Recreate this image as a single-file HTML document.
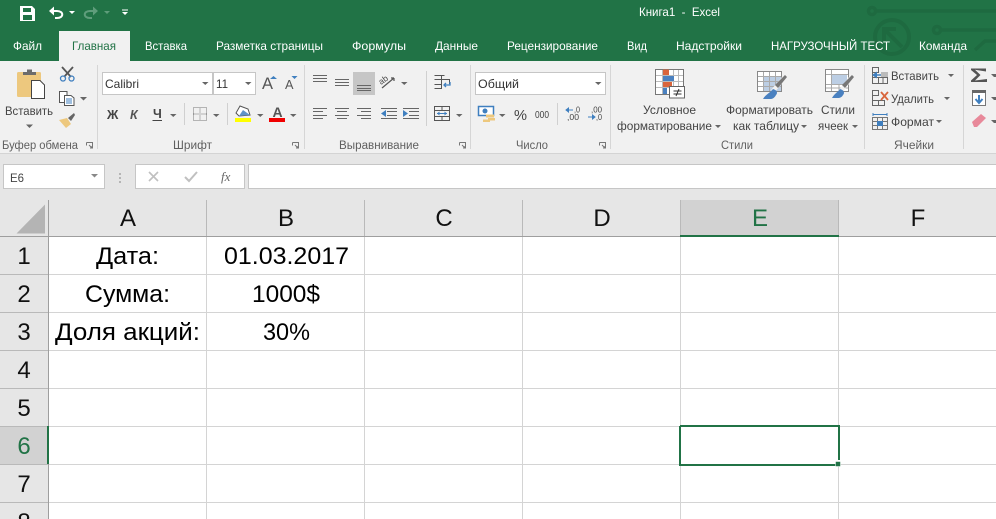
<!DOCTYPE html>
<html><head><meta charset="utf-8"><style>
html,body{margin:0;padding:0;width:996px;height:519px;overflow:hidden;background:#fff}
svg{display:block}
text{font-family:"Liberation Sans","Noto Sans CJK SC",sans-serif}
.t{font-size:12px;fill:#fff}
.r{font-size:12px;fill:#444}
.g{font-size:11.5px;fill:#5f5f5f}
.c{font-size:24px;fill:#000}
.h{font-size:24px;fill:#111}
</style></head><body>
<svg width="996" height="519" viewBox="0 0 996 519" xmlns="http://www.w3.org/2000/svg">
<rect width="996" height="61" fill="#217346"/>
<g fill="none" stroke="#1e6a40" stroke-width="3.5">
<circle cx="872" cy="11" r="3.500"/><path d="M876 11H996"/>
<circle cx="892" cy="37" r="17" stroke-width="4"/><path d="M902 47L885 30M884 41V29H896" stroke-width="4"/>
<circle cx="937" cy="30" r="3.500"/><path d="M941 30H996"/>
<path d="M975 50L985 41H996"/>
</g>
<!-- ribbon -->
<rect y="61" width="996" height="92" fill="#f1f1f1"/>
<rect y="153" width="996" height="47" fill="#e6e6e6"/>
<rect y="153" width="996" height="1" fill="#d4d4d4"/>
<rect x="59" y="31" width="71" height="30" fill="#f1f1f1"/>
<!-- QAT -->
<path d="M20 6H32L35 9V21H20ZM23 8V12H31V8ZM23 15V20H32V15Z" fill="#fff" fill-rule="evenodd"/>
<path d="M50 11H57C64 11 64 18 57 18H55" fill="none" stroke="#fff" stroke-width="2"/><path d="M49 11L54 6.500V15.500Z" fill="#fff"/>
<path d="M97 11H90C83 11 83 18 90 18H92" fill="none" stroke="#5f9d7b" stroke-width="2"/><path d="M98 11L93 6.500V15.500Z" fill="#5f9d7b"/>
<path d="M69 11h6l-3 3z" fill="#fff"/><path d="M104 11h6l-3 3z" fill="#5f9d7b"/>
<path d="M122 9.500h6v1h-6zM122 12h6l-3 3z" fill="#fff"/>
<text x="639" y="16" class="t" textLength="81" lengthAdjust="spacingAndGlyphs" xml:space="preserve">Книга1  -  Excel</text>
<!-- tabs -->
<text x="13" y="50" class="t" textLength="29" lengthAdjust="spacingAndGlyphs">Файл</text>
<text x="72" y="50" class="t" style="fill:#217346" textLength="44" lengthAdjust="spacingAndGlyphs">Главная</text>
<text x="145" y="50" class="t" textLength="42" lengthAdjust="spacingAndGlyphs">Вставка</text>
<text x="216" y="50" class="t" textLength="107" lengthAdjust="spacingAndGlyphs">Разметка страницы</text>
<text x="352" y="50" class="t" textLength="54" lengthAdjust="spacingAndGlyphs">Формулы</text>
<text x="435" y="50" class="t" textLength="43" lengthAdjust="spacingAndGlyphs">Данные</text>
<text x="507" y="50" class="t" textLength="91" lengthAdjust="spacingAndGlyphs">Рецензирование</text>
<text x="627" y="50" class="t" textLength="20" lengthAdjust="spacingAndGlyphs">Вид</text>
<text x="676" y="50" class="t" textLength="66" lengthAdjust="spacingAndGlyphs">Надстройки</text>
<text x="771" y="50" class="t" textLength="119" lengthAdjust="spacingAndGlyphs">НАГРУЗОЧНЫЙ ТЕСТ</text>
<text x="919" y="50" class="t" textLength="48" lengthAdjust="spacingAndGlyphs">Команда</text>
<!-- ribbon separators -->
<path d="M97.500 65V149M304.500 65V149M470.500 65V149M610.500 65V149M864.500 65V149M963.500 65V149" stroke="#d6d6d6"/>
<path d="M184.500 103V125M227.500 103V125M426.500 71V126M557.500 103V125" stroke="#d0d0d0"/>
<!-- clipboard -->
<rect x="17" y="72" width="24" height="25" rx="1.500" fill="#edc87e"/>
<path d="M23 75V72H27V69.500H32V72H36V75Z" fill="#6b6b6b"/>
<path d="M31.500 80.500H40L44.500 85V98.500H31.500Z" fill="#fff" stroke="#444"/>
<text x="5" y="115" class="r" textLength="48" lengthAdjust="spacingAndGlyphs">Вставить</text>
<path d="M62 67L71 77M73 67L64 77" stroke="#555" stroke-width="1.800"/>
<circle cx="63" cy="78.500" r="2.500" fill="none" stroke="#3f7fbf" stroke-width="1.300"/><circle cx="71.500" cy="78.500" r="2.500" fill="none" stroke="#3f7fbf" stroke-width="1.300"/>
<path d="M59.500 91.500H67V102.500H59.500Z" fill="#fff" stroke="#555"/><path d="M64.500 95.500H71L74 98V105.500H64.500Z" fill="#fff" stroke="#555"/><path d="M66 99h6M66 101h6M66 103h6" stroke="#3f7fbf"/>
<path d="M59 120L67 118L71 124L66 128Z" fill="#edc87e"/><path d="M68 118L74 113L75 115L71 121Z" fill="#666"/>
<!-- font -->
<rect x="102.500" y="72.500" width="110" height="22" fill="#fff" stroke="#c6c6c6"/>
<rect x="213.500" y="72.500" width="42" height="22" fill="#fff" stroke="#c6c6c6"/>
<text x="105" y="88" class="r" style="fill:#333" textLength="34" lengthAdjust="spacingAndGlyphs">Calibri</text>
<text x="216" y="88" class="r" style="fill:#333" textLength="12" lengthAdjust="spacingAndGlyphs">11</text>
<text x="262" y="89" style="font-size:17px;fill:#555" textLength="11" lengthAdjust="spacingAndGlyphs">A</text>
<text x="285" y="89" style="font-size:13px;fill:#555" textLength="8.500" lengthAdjust="spacingAndGlyphs">A</text>
<path d="M270 79l3.500-3 3.500 3zM291.500 76h6l-3 3z" fill="#3f7fbf"/>
<text x="107" y="119" style="font-size:12.500px;font-weight:bold;fill:#444">Ж</text>
<text x="130" y="119" style="font-size:12.500px;font-weight:bold;font-style:italic;fill:#555">К</text>
<text x="153" y="118" style="font-size:12.500px;font-weight:bold;fill:#444">Ч</text>
<path d="M152.500 120.500H162" stroke="#444"/>
<path d="M193.500 107.500H206.500V120.500H193.500ZM200 107.500V120.500M193.500 114H206.500" fill="none" stroke="#777" stroke-dasharray="1 1"/>
<path d="M240 106L248 109L250 115L239 116L236 113Z" fill="#fff" stroke="#555"/><path d="M243 110L250 115L239 116Z" fill="#5f93c8"/>
<rect x="235" y="118" width="16" height="4" fill="#ffff00"/>
<text x="272.500" y="117" style="font-size:14px;font-weight:bold;fill:#555">A</text>
<rect x="269" y="118" width="16" height="4" fill="#f00000"/>
<!-- alignment -->
<path d="M313 75.500h14M313 78.500h14M313 81.500h14M335 79.500h14M335 82.500h14M335 85.500h14" stroke="#666"/>
<rect x="353" y="72" width="22" height="23" fill="#c6c6c6"/>
<path d="M357 85.500h14M357 88.500h14M357 90.500h14" stroke="#666"/>
<path d="M382 88L394 78M394 78h-3M394 78v3" stroke="#555" stroke-width="1.200" fill="none"/>
<text x="381" y="85" transform="rotate(-35 381 85)" style="font-size:8.500px;fill:#444">ab</text>
<path d="M313 108.500h14M313 111.500h10M313 115.500h14M313 118.500h10M335 108.500h14M337 111.500h10M335 115.500h14M337 118.500h10M357 108.500h14M361 111.500h10M357 115.500h14M361 118.500h10M381 108.500h16M387 111.500h10M387 115.500h10M381 118.500h16M403 108.500h16M409 111.500h10M409 115.500h10M403 118.500h16" stroke="#666"/>
<path d="M381 113.500l5-3.500v7z" fill="#3f7fbf"/><path d="M408 113.500l-5-3.500v7z" fill="#3f7fbf"/>
<path d="M434.500 75.500h10M434.500 79.500h15V84M434.500 84.500h7M434.500 88.500h7V75.500" fill="none" stroke="#555"/>
<path d="M450 82V85H444M446 83l-2 2 2 2" fill="none" stroke="#3f7fbf" stroke-width="1.300"/>
<path d="M434.500 106.500H449.500V120.500H434.500ZM434.500 110.500H449.500M434.500 116.500H449.500M442 106.500V110.500M442 116.500V120.500" fill="none" stroke="#555"/>
<path d="M437 113.500H447" stroke="#3f7fbf"/><path d="M437 113.500l2.500-2v4zM447 113.500l-2.500-2v4z" fill="#3f7fbf"/>
<!-- number -->
<rect x="475.500" y="72.500" width="130" height="22" fill="#fff" stroke="#c6c6c6"/>
<text x="478" y="88" class="r" style="fill:#333" textLength="41" lengthAdjust="spacingAndGlyphs">Общий</text>
<rect x="478.500" y="106.500" width="15" height="9" fill="#fff" stroke="#3f7fbf" stroke-width="1.500"/>
<circle cx="485" cy="111" r="2.500" fill="#3f7fbf"/>
<path d="M486 114.500h8v3h-8zM488 118h7v2.500h-7zM483 119.500h7v2.500h-7z" fill="#edc87e"/>
<text x="514" y="120" style="font-size:15px;fill:#444" textLength="13" lengthAdjust="spacingAndGlyphs">%</text>
<text x="535" y="118" style="font-size:10px;fill:#444" textLength="14" lengthAdjust="spacingAndGlyphs">000</text>
<path d="M566 110H573M566 110l2.500-2v4z" stroke="#3f7fbf" fill="#3f7fbf"/>
<text x="574" y="112.500" style="font-size:8.500px;fill:#444" textLength="6" lengthAdjust="spacingAndGlyphs">,0</text>
<text x="567" y="120" style="font-size:8.500px;fill:#444" textLength="12" lengthAdjust="spacingAndGlyphs">,00</text>
<text x="591" y="112.500" style="font-size:8.500px;fill:#444" textLength="11" lengthAdjust="spacingAndGlyphs">,00</text>
<path d="M588 117H595M595 117l-2.500-2v4z" stroke="#3f7fbf" fill="#3f7fbf"/>
<text x="596" y="120" style="font-size:8.500px;fill:#444" textLength="6" lengthAdjust="spacingAndGlyphs">,0</text>
<!-- styles icons -->
<g transform="translate(655 69)">
<rect x="0.500" y="0.500" width="28" height="25" fill="#fff" stroke="#777"/>
<path d="M7.500 1V25M18.500 1V25M23.500 1V25M1 6.500H28M1 12.500H28M1 18.500H28" stroke="#bbb"/>
<rect x="8" y="0.500" width="6" height="5.500" fill="#d9653c"/><rect x="8" y="7" width="11" height="5" fill="#4a81c0"/><rect x="8" y="13" width="9" height="5" fill="#d9653c"/><rect x="8" y="19" width="4" height="6" fill="#4a81c0"/>
<rect x="14.500" y="17.500" width="15" height="11.500" fill="#fff" stroke="#666"/>
<path d="M18.500 22h8M18.500 25h8M24 20l-3 7" stroke="#333" fill="none"/>
</g>
<g transform="translate(757 71)">
<rect x="0.500" y="0.500" width="24" height="20" fill="#fff" stroke="#888"/>
<rect x="6" y="5" width="18" height="15" fill="#bccee4"/>
<path d="M6.500 1V20M12.500 1V20M18.500 1V20M1 5.500H24M1 10.500H24M1 15.500H24" stroke="#aaa"/>
<path d="M17 22L28 9L25 6L14 19Z" fill="#f1f1f1"/><path d="M21 17L30 6L28 4L18 14Z" fill="#777"/>
<path d="M6 28C9 23 13 22 16 18C20 19 21 22 19 24C18 26 16 28 14 28Z" fill="#4a81c0"/>
</g>
<g transform="translate(825 69)">
<rect x="0.500" y="0.500" width="23" height="22" fill="#fff" stroke="#888"/>
<rect x="6" y="6" width="16" height="9" fill="#bccee4"/>
<path d="M6.500 1V22M1 5.500H23M1 15.500H23M1 19H23M14 15V22" stroke="#aaa" fill="none"/>
<path d="M17 24L27 11L24 8L14 21Z" fill="#f1f1f1"/><path d="M20 19L29 8L27 6L17 16Z" fill="#777"/>
<path d="M7 29C10 24 13 23 15 20C19 21 20 24 18 26C17 28 15 29 13 29Z" fill="#4a81c0"/>
</g>
<text x="643" y="114" class="r" textLength="53" lengthAdjust="spacingAndGlyphs">Условное</text>
<text x="617" y="130" class="r" textLength="95" lengthAdjust="spacingAndGlyphs">форматирование</text>
<text x="726" y="114" class="r" textLength="87" lengthAdjust="spacingAndGlyphs">Форматировать</text>
<text x="733" y="130" class="r" textLength="66" lengthAdjust="spacingAndGlyphs">как таблицу</text>
<text x="821" y="114" class="r" textLength="34" lengthAdjust="spacingAndGlyphs">Стили</text>
<text x="818" y="130" class="r" textLength="30" lengthAdjust="spacingAndGlyphs">ячеек</text>
<!-- cells -->
<path d="M872.500 67.500H878.500V72.500H872.500ZM872.500 77.500H887.500V83.500H872.500ZM878.500 77.500V83.500M883 77.500V83.500M872.500 72.500V77.500" fill="none" stroke="#666"/>
<path d="M877 75H887" stroke="#3f7fbf" stroke-width="1.500"/><rect x="881" y="72" width="7" height="5" fill="#bbb"/><path d="M872 75l5-3.500v7z" fill="#3f7fbf"/>
<path d="M872.500 90.500H878.500V95.500H872.500ZM872.500 100.500H884.500V105.500H872.500ZM878.500 100.500V105.500M872.500 95.500V100.500" fill="none" stroke="#666"/>
<path d="M881 92L888 100M888 92L881 100" stroke="#d9653c" stroke-width="1.800"/>
<path d="M872.500 117.500H887.500V129.500H872.500ZM877.500 117.500V129.500M882.500 117.500V129.500M872.500 121.500H887.500M872.500 125.500H887.500" fill="none" stroke="#777"/>
<rect x="877" y="121" width="6" height="5" fill="#3f7fbf"/>
<path d="M872.500 114.500H887.500M873 113v3M887 113v3" stroke="#3f7fbf"/>
<text x="891" y="80" class="r" textLength="48" lengthAdjust="spacingAndGlyphs">Вставить</text>
<text x="891" y="103" class="r" textLength="43" lengthAdjust="spacingAndGlyphs">Удалить</text>
<text x="891" y="126" class="r" textLength="43" lengthAdjust="spacingAndGlyphs">Формат</text>
<!-- editing -->
<path d="M971 68.500H986V71.500L975 69.800L980.500 75L975 80.500L987 79V82H971V80.500L977 75L971 70Z" fill="#555"/>
<rect x="972.500" y="90.500" width="13" height="15" fill="#fff" stroke="#777"/><rect x="972" y="90" width="14" height="3" fill="#666"/>
<path d="M979 95V102M975.500 99L979 103L982.500 99" fill="none" stroke="#3f7fbf" stroke-width="2"/>
<path d="M972 122L981 114L986 118L977 127H974Z" fill="#e8899a"/>
<!-- dropdown arrows -->
<path d="M26 124.500h7l-3.500 3.500zM80 97h7l-3.500 3.500zM170 114h6.500l-3.250 3zM213 114h6.500l-3.250 3zM257 114h6.500l-3.250 3zM290 114h6.500l-3.250 3zM202 82h6.500l-3.250 3zM245 82h6.500l-3.250 3zM401 82h6.500l-3.250 3zM456 114h6.500l-3.250 3zM499 114h6.500l-3.250 3zM595 82h6.500l-3.250 3zM715 125h6l-3 3zM801 125h6l-3 3zM852 125h6l-3 3zM948 74h6l-3 3zM944 97h6l-3 3zM936 120h6l-3 3zM991 74h5v3h-2zM991 97h5v3h-2zM991 120h5v3h-2z" fill="#666"/>
<!-- group labels -->
<text x="2" y="149" class="g" textLength="76" lengthAdjust="spacingAndGlyphs">Буфер обмена</text>
<text x="173" y="149" class="g" textLength="39" lengthAdjust="spacingAndGlyphs">Шрифт</text>
<text x="339" y="149" class="g" textLength="80" lengthAdjust="spacingAndGlyphs">Выравнивание</text>
<text x="516" y="149" class="g" textLength="32" lengthAdjust="spacingAndGlyphs">Число</text>
<text x="721" y="149" class="g" textLength="32" lengthAdjust="spacingAndGlyphs">Стили</text>
<text x="894" y="149" class="g" textLength="40" lengthAdjust="spacingAndGlyphs">Ячейки</text>
<path d="M86.500 142.500h6v6M86.500 142.500v3M89 145l3 3M92 146v2h-2M292.500 142.500h6v6M292.500 142.500v3M295 145l3 3M298 146v2h-2M459.500 142.500h6v6M459.500 142.500v3M462 145l3 3M465 146v2h-2M599.500 142.500h6v6M599.500 142.500v3M602 145l3 3M605 146v2h-2" fill="none" stroke="#777"/>
<!-- formula bar -->
<rect x="3.500" y="164.500" width="101" height="24" fill="#fff" stroke="#c6c6c6"/>
<text x="10" y="182" class="r" style="fill:#444" textLength="14" lengthAdjust="spacingAndGlyphs">E6</text>
<path d="M91 174h7l-3.500 3.500z" fill="#888"/>
<path d="M119 173h2v2h-2zM119 177h2v2h-2zM119 181h2v2h-2z" fill="#b5b5b5"/>
<rect x="135.500" y="164.500" width="109" height="24" fill="#fff" stroke="#c6c6c6"/>
<rect x="248.500" y="164.500" width="748" height="24" fill="#fff" stroke="#c6c6c6"/>
<path d="M149 172L158 181M158 172L149 181" stroke="#c0c0c0" stroke-width="1.600"/>
<path d="M185 177L189 181L197 172" fill="none" stroke="#c0c0c0" stroke-width="2"/>
<text x="221" y="181" style="font-family:'Liberation Serif',serif;font-size:13px;font-style:italic;fill:#666">fx</text>
<!-- grid -->
<rect y="200" width="996" height="37" fill="#e6e6e6"/>
<rect y="237" width="48" height="282" fill="#e6e6e6"/>
<rect x="680" y="200" width="159" height="36" fill="#d2d2d2"/>
<rect y="426" width="47" height="38" fill="#d2d2d2"/>
<path d="M206.500 237V519M364.500 237V519M522.500 237V519M680.500 237V426M838.500 237V426M838.500 466V519M680.500 466V519M49 274.500H996M49 312.500H996M49 350.500H996M49 388.500H996M49 426.500H996M49 464.500H996M49 502.500H996" stroke="#d4d4d4" fill="none"/>
<path d="M206.500 200V236M364.500 200V236M522.500 200V236M680.500 200V236M838.500 200V236" stroke="#b9b9b9"/>
<path d="M0 274.500H48M0 312.500H48M0 350.500H48M0 388.500H48M0 426.500H48M0 464.500H48M0 502.500H48" stroke="#b9b9b9"/>
<path d="M48.500 200V519M0 236.500H996" stroke="#9e9e9e"/>
<path d="M16.500 233.500L45 204.500V233.500Z" fill="#b4b4b4"/>
<rect x="680" y="235" width="159" height="2" fill="#217346"/>
<rect x="47" y="426" width="2" height="38" fill="#217346"/>
<!-- column heads -->
<text x="128" y="226" class="h" text-anchor="middle">A</text>
<text x="286" y="226" class="h" text-anchor="middle">B</text>
<text x="444" y="226" class="h" text-anchor="middle">C</text>
<text x="602" y="226" class="h" text-anchor="middle">D</text>
<text x="760" y="226" class="h" text-anchor="middle" style="fill:#217346">E</text>
<text x="918" y="226" class="h" text-anchor="middle">F</text>
<!-- row heads -->
<text x="24" y="264" class="h" text-anchor="middle">1</text>
<text x="24" y="302" class="h" text-anchor="middle">2</text>
<text x="24" y="340" class="h" text-anchor="middle">3</text>
<text x="24" y="378" class="h" text-anchor="middle">4</text>
<text x="24" y="416" class="h" text-anchor="middle">5</text>
<text x="24" y="454" class="h" text-anchor="middle" style="fill:#217346">6</text>
<text x="24" y="492" class="h" text-anchor="middle">7</text>
<text x="24" y="530" class="h" text-anchor="middle">8</text>
<!-- cells -->
<text x="96" y="264" class="c" textLength="63" lengthAdjust="spacingAndGlyphs">Дата:</text>
<text x="85" y="302" class="c" textLength="85" lengthAdjust="spacingAndGlyphs">Сумма:</text>
<text x="55" y="340" class="c" textLength="145" lengthAdjust="spacingAndGlyphs">Доля акций:</text>
<text x="224" y="264" class="c" textLength="125" lengthAdjust="spacingAndGlyphs">01.03.2017</text>
<text x="252" y="302" class="c" textLength="68" lengthAdjust="spacingAndGlyphs">1000$</text>
<text x="263" y="340" class="c" textLength="47" lengthAdjust="spacingAndGlyphs">30%</text>
<!-- selection -->
<path d="M680 426H839V460M836 465H680V426" fill="none" stroke="#217346" stroke-width="2"/>
<rect x="835.500" y="461.500" width="5" height="5" fill="#217346" stroke="#fff" stroke-width="0.500"/>
</svg>
</body></html>
